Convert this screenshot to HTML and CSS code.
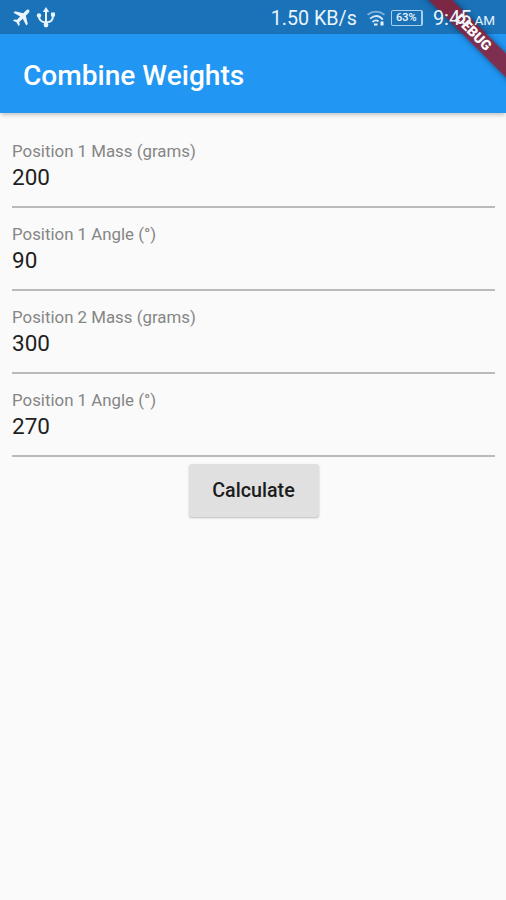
FILE: index.html
```
<!DOCTYPE html>
<html lang="en">
<head>
    <meta charset="UTF-8">
    <meta name="viewport" content="width=device-width, initial-scale=1.0">
    <title>Combine Weights</title>
    <link rel="stylesheet" href="styles.css">
</head>
<body>
    <div class="debug-corner">
        <div class="debug-banner">DEBUG</div>
    </div>

    <div class="status-bar">
        <div class="status-icons">
            <svg class="plane" viewBox="0 0 18 18" width="18" height="18">
                <path d="M17 1c-1-.8-2.200-.3-3 .5L11.200 4.300 3 2.300 1.500 3.800l6.700 3.600-3.300 3.400-2.700-.4L1 11.600l3.600 1.900L6.500 17l1.200-1.200-.4-2.700 3.400-3.300 3.600 6.700 1.500-1.500-2-8.200L16.500 4c.9-.9 1.300-2.100.5-3z"/>
            </svg>
            <svg class="usb" viewBox="0 0 20 22" width="20" height="22">
                <path class="line" d="M10 4v14M10 15.500C5 15 3 13.500 3 9M10 15.500c5-.5 7-2 7-7"/>
                <path d="M10 0l3.200 5H6.800z"/>
                <circle cx="10" cy="18" r="2.400"/>
                <circle cx="3" cy="8.500" r="2.200"/>
                <path d="M15 5.500h4v4h-4z"/>
            </svg>
        </div>
        <span class="speed">1.50 KB/s</span>
        <svg class="wifi" viewBox="0 0 20 16" width="20" height="16">
            <path class="faint" d="M1.500 4.800Q10-1.500 18.500 4.800"/>
            <path d="M4 8.600Q11.500 2.800 16.800 9.600"/>
            <path d="M6.500 12Q10 9 12.500 11.500"/>
            <path class="dot" d="M8 13.500h3.500v2H8zM14.500 11.500h3v4h-3z"/>
        </svg>
        <span class="battery">63%</span>
        <span class="clock">9:45 <small>AM</small></span>
    </div>

    <header class="app-bar">
        <h1>Combine Weights</h1>
    </header>

    <form class="weights-form">
        <div class="field">
            <label for="mass1">Position 1 Mass (grams)</label>
            <input type="text" id="mass1" value="200">
        </div>
        <div class="field">
            <label for="angle1">Position 1 Angle (°)</label>
            <input type="text" id="angle1" value="90">
        </div>
        <div class="field">
            <label for="mass2">Position 2 Mass (grams)</label>
            <input type="text" id="mass2" value="300">
        </div>
        <div class="field">
            <label for="angle2">Position 1 Angle (°)</label>
            <input type="text" id="angle2" value="270">
        </div>
        <button type="button">Calculate</button>
    </form>
</body>
</html>
```

FILE: styles.css
```
* {
    box-sizing: border-box;
}

body {
    position: relative;
    margin: 0;
    min-height: 100vh;
    background-color: #fafafa;
    font-family: Roboto, sans-serif;
}

.status-bar {
    display: flex;
    align-items: center;
    height: 34px;
    padding: 2px 11px 0 12px;
    background-color: #1a72b8;
    color: #e9f4fc;
}

.status-icons {
    display: flex;
    align-items: center;
    gap: 6px;
    margin-right: auto;
}

.status-icons svg {
    fill: #e9f4fc;
}

.usb .line {
    fill: none;
    stroke: #e9f4fc;
    stroke-width: 2;
}

.speed {
    font-size: 19.7px;
}

.wifi {
    margin: 0 5px 0 9px;
    fill: none;
    stroke: #d5e9f8;
    stroke-width: 1.8;
}

.wifi .dot {
    fill: #e9f4fc;
    stroke: none;
}

.wifi .faint {
    stroke: #7fb4dc;
}

.battery {
    width: 32px;
    height: 16px;
    border: 1px solid #a9d0ec;
    border-right-width: 2px;
    border-radius: 2px;
    font-size: 11px;
    font-weight: 500;
    line-height: 14px;
    text-align: center;
}

/* the clock stays readable above the banner */
.clock {
    position: relative;
    z-index: 2;
    margin-left: 10px;
    font-size: 20px;
    white-space: nowrap;
}

.clock small {
    margin-left: -2px;
    font-size: 13.5px;
}

.debug-corner {
    position: absolute;
    z-index: 1;
    top: 0;
    right: 0;
    width: 90px;
    height: 90px;
    overflow: hidden;
}

.debug-banner {
    position: absolute;
    top: 24px;
    right: -67px;
    width: 200px;
    height: 17px;
    background-color: rgba(147, 24, 44, 0.82);
    box-shadow: 0 0 6px rgba(0, 0, 0, 0.45);
    color: #fff;
    font-size: 14px;
    font-weight: 900;
    line-height: 17px;
    text-align: center;
    transform: rotate(45deg);
}

.app-bar {
    display: flex;
    align-items: center;
    height: 79px;
    padding: 3px 23px 0;
    background-color: #2196f3;
    box-shadow: 0 3px 4px -1px rgba(0, 0, 0, 0.22);
}

h1 {
    margin: 0;
    color: #fff;
    font-size: 28.1px;
    font-weight: 500;
}

.weights-form {
    display: flex;
    flex-direction: column;
    align-items: center;
    padding: 12px 11px 0 12px;
}

.field {
    width: 100%;
    height: 83px;
    padding-top: 16px;
    border-bottom: 2px solid #bababa;
}

label {
    display: block;
    color: #868686;
    font-size: 16.85px;
    line-height: 20px;
}

input {
    display: block;
    width: 100%;
    height: 28px;
    margin-top: 2px;
    padding: 0;
    border: none;
    outline: none;
    background: transparent;
    color: #1f1f1f;
    font-family: inherit;
    font-size: 22.5px;
}

button {
    width: 130px;
    height: 53px;
    margin-top: 7px;
    padding: 0;
    border: none;
    border-radius: 3px;
    background-color: #e0e0e0;
    box-shadow: 0 1px 2px rgba(0, 0, 0, 0.25);
    color: #1c1c1c;
    font-family: inherit;
    font-size: 19.7px;
    font-weight: 500;
}
```
